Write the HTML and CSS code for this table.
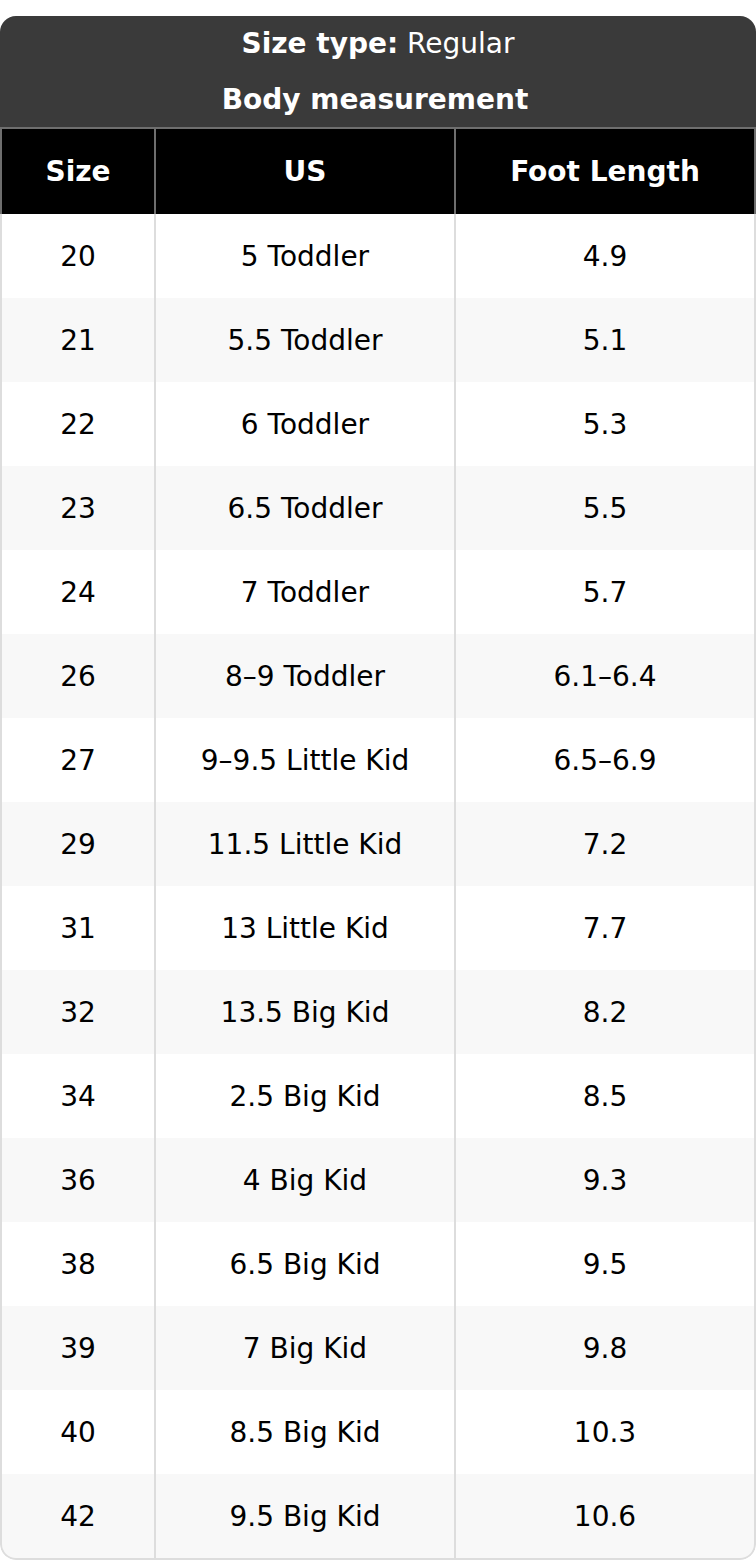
FILE: index.html
```html
<!DOCTYPE html>
<html>
<head>
<meta charset="utf-8">
<link rel="stylesheet" href="styles.css">
</head>
<body>
<div class="chart">
  <div class="title">
    <div class="title-line"><b>Size type:</b> Regular</div>
    <div class="title-line"><b>Body measurement</b></div>
  </div>
  <table class="grid">
    <thead>
      <tr><th>Size</th><th>US</th><th>Foot Length</th></tr>
    </thead>
    <tbody>
      <tr><td>20</td><td>5 Toddler</td><td>4.9</td></tr>
      <tr><td>21</td><td>5.5 Toddler</td><td>5.1</td></tr>
      <tr><td>22</td><td>6 Toddler</td><td>5.3</td></tr>
      <tr><td>23</td><td>6.5 Toddler</td><td>5.5</td></tr>
      <tr><td>24</td><td>7 Toddler</td><td>5.7</td></tr>
      <tr><td>26</td><td>8–9 Toddler</td><td>6.1–6.4</td></tr>
      <tr><td>27</td><td>9–9.5 Little Kid</td><td>6.5–6.9</td></tr>
      <tr><td>29</td><td>11.5 Little Kid</td><td>7.2</td></tr>
      <tr><td>31</td><td>13 Little Kid</td><td>7.7</td></tr>
      <tr><td>32</td><td>13.5 Big Kid</td><td>8.2</td></tr>
      <tr><td>34</td><td>2.5 Big Kid</td><td>8.5</td></tr>
      <tr><td>36</td><td>4 Big Kid</td><td>9.3</td></tr>
      <tr><td>38</td><td>6.5 Big Kid</td><td>9.5</td></tr>
      <tr><td>39</td><td>7 Big Kid</td><td>9.8</td></tr>
      <tr><td>40</td><td>8.5 Big Kid</td><td>10.3</td></tr>
      <tr><td>42</td><td>9.5 Big Kid</td><td>10.6</td></tr>
    </tbody>
  </table>
</div>
</body>
</html>
```
FILE: styles.css
```css
html, body {
  margin: 0;
  padding: 0;
  background: #ffffff;
}
body {
  padding-top: 16px;
  font-family: "DejaVu Sans", sans-serif;
  color: #000;
}
.chart {
  width: 756px;
  border-radius: 16px;
  overflow: hidden;
  background: #fff;
}
.title {
  background: #3a3a3a;
  color: #fff;
  text-align: center;
  font-size: 28px;
}
.title-line {
  height: 56px;
  line-height: 56px;
}
.title-line.body-line,
.title-line:last-child {
  height: 55px;
  line-height: 56px;
  padding-right: 6px;
}
.grid {
  width: 756px;
  border-collapse: separate;
  border-spacing: 0;
  table-layout: fixed;
}
.grid th, .grid td {
  padding: 0;
  text-align: center;
  vertical-align: middle;
}
.grid th {
  background: #000;
  color: #fff;
  font-weight: bold;
  font-size: 28px;
  height: 85px;
  border-top: 2px solid #6e6e6e;
  border-right: 2px solid #6e6e6e;
}
.grid th:first-child { width: 152px; border-left: 2px solid #6e6e6e; }
.grid th:nth-child(2) { width: 298px; }
.grid th:last-child { width: 298px; }
.grid td {
  font-size: 28px;
  height: 84px;
  border-right: 2px solid #dddddd;
}
.grid td:first-child { border-left: 2px solid #dddddd; }
.grid tbody tr:nth-child(even) td { background: #f8f8f8; }
.grid tbody tr:last-child td { border-bottom: 2px solid #dddddd; height: 84px; }
.grid tbody tr:last-child td:first-child { border-bottom-left-radius: 16px; }
.grid tbody tr:last-child td:last-child { border-bottom-right-radius: 16px; }
```
